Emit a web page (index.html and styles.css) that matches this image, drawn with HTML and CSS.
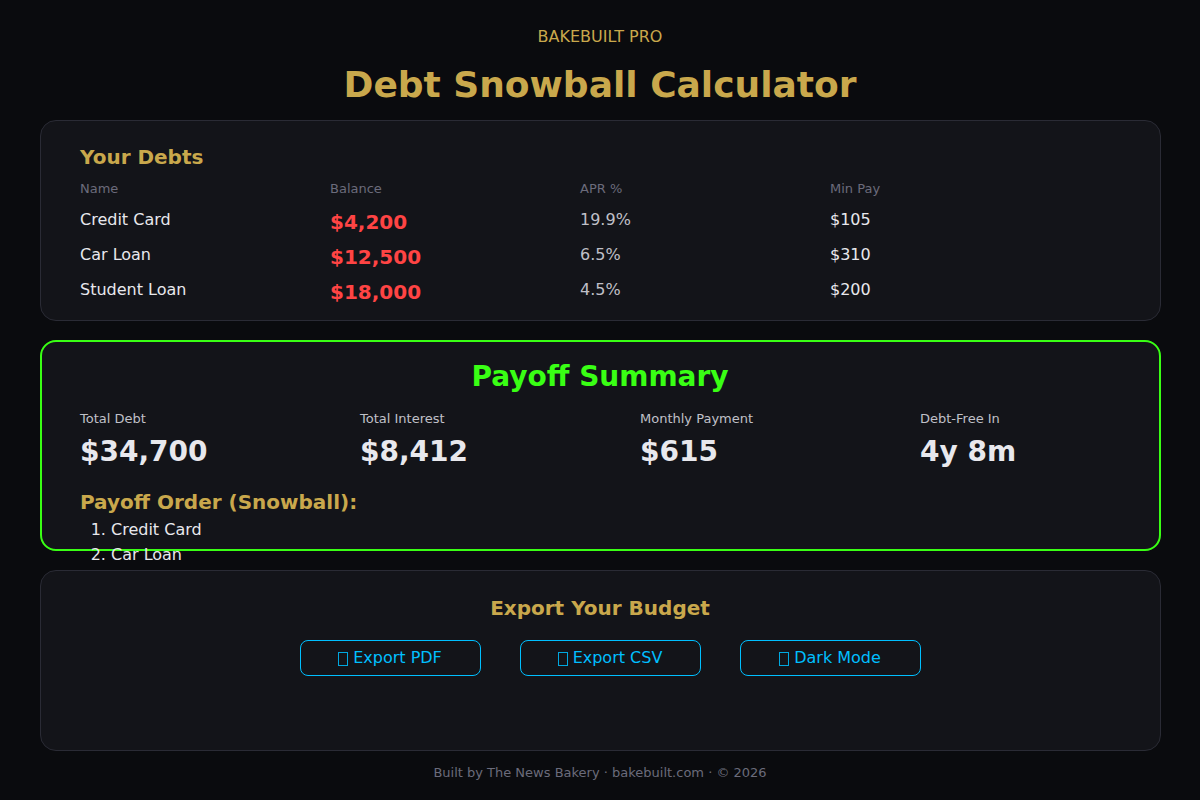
FILE: index.html
```
<!DOCTYPE html>
<html lang="en">
<head>
  <meta charset="UTF-8">
  <meta name="viewport" content="width=device-width, initial-scale=1.0">
  <title>Debt Snowball Calculator</title>
  <link rel="stylesheet" href="styles.css">
</head>
<body>

  <header>
    <div class="brand">BAKEBUILT PRO</div>
    <h1>Debt Snowball Calculator</h1>
  </header>

  <main>
    <section class="card debts">
      <h2>Your Debts</h2>
      <table>
        <thead>
          <tr>
            <th>Name</th>
            <th>Balance</th>
            <th>APR %</th>
            <th class="last">Min Pay</th>
          </tr>
        </thead>
        <tbody>
          <tr>
            <td>Credit Card</td>
            <td class="balance">$4,200</td>
            <td class="apr">19.9%</td>
            <td>$105</td>
          </tr>
          <tr>
            <td>Car Loan</td>
            <td class="balance">$12,500</td>
            <td class="apr">6.5%</td>
            <td>$310</td>
          </tr>
          <tr>
            <td>Student Loan</td>
            <td class="balance">$18,000</td>
            <td class="apr">4.5%</td>
            <td>$200</td>
          </tr>
        </tbody>
      </table>
    </section>

    <section class="card summary">
      <h2 class="summary-title">Payoff Summary</h2>
      <div class="stats">
        <div>
          <div class="label">Total Debt</div>
          <div class="value">$34,700</div>
        </div>
        <div>
          <div class="label">Total Interest</div>
          <div class="value">$8,412</div>
        </div>
        <div>
          <div class="label">Monthly Payment</div>
          <div class="value">$615</div>
        </div>
        <div>
          <div class="label">Debt-Free In</div>
          <div class="value">4y 8m</div>
        </div>
      </div>
      <h3>Payoff Order (Snowball):</h3>
      <ol>
        <li>Credit Card</li>
        <li>Car Loan</li>
      </ol>
    </section>

    <section class="card export">
      <h2>Export Your Budget</h2>
      <div class="buttons">
        <button type="button"><span class="icon"></span>Export PDF</button>
        <button type="button"><span class="icon"></span>Export CSV</button>
        <button type="button"><span class="icon"></span>Dark Mode</button>
      </div>
    </section>
  </main>

  <footer>Built by The News Bakery · bakebuilt.com · © 2026</footer>

</body>
</html>
```
FILE: styles.css
```
* {
  box-sizing: border-box;
}
body {
  margin: 0;
  background: #0a0b0e;
  color: #e8e8ed;
  font-family: "DejaVu Sans", sans-serif;
  font-size: 16px;
}
h1, h2, h3 {
  margin: 0;
  color: #c9a84c;
}
h2, h3 {
  font-size: 20px;
  line-height: 24px;
}
header {
  padding: 25px 0 11px;
  text-align: center;
}
.brand {
  color: #c9a84c;
  line-height: 24px;
  margin-bottom: 12px;
}
h1 {
  font-size: 36px;
  line-height: 48px;
}
main {
  display: flex;
  flex-direction: column;
  gap: 19px;
  padding: 0 39px 0 40px;
}
.card {
  background: #131419;
  border: 1px solid #2a2b35;
  border-radius: 16px;
  padding: 24px 39px 13px;
}

/* debts table */
table {
  width: 100%;
  table-layout: fixed;
  border-collapse: collapse;
}
th, td {
  padding: 0;
  text-align: left;
}
th {
  width: 250px;
  padding: 10px 0 3px;
  font-size: 13px;
  font-weight: normal;
  line-height: 20px;
  color: #6b6b7b;
}
th.last {
  width: auto;
}
td {
  height: 35px;
  line-height: 24px;
}
.balance {
  padding-top: 5px;
  font-size: 20px;
  font-weight: bold;
  color: #ff4444;
}
.apr {
  color: #c0c0c8;
}

/* payoff summary */
.summary {
  border: 2px solid #39ff14;
  padding: 19px 39px 0 38px;
}
.summary-title {
  text-align: center;
  font-size: 28px;
  line-height: 32px;
  color: #39ff14;
}
.stats {
  display: grid;
  grid-template-columns: 7fr 7fr 7fr 5fr;
  margin: 16px 0 18px;
}
.label {
  font-size: 13px;
  line-height: 20px;
  color: #c0c0c8;
}
.value {
  margin-top: 3px;
  font-size: 28px;
  font-weight: bold;
  line-height: 40px;
}
ol {
  /* the list runs past the bottom of the card */
  height: 32px;
  margin: 3px 0 0;
  padding-left: 31px;
  line-height: 25px;
}

/* export */
.export {
  padding: 25px 40px 74px 39px;
  text-align: center;
}
.buttons {
  display: flex;
  justify-content: center;
  gap: 39px;
  margin: 20px 0 0 21px;
}
button {
  display: flex;
  align-items: center;
  justify-content: center;
  gap: 5px;
  width: 181px;
  height: 36px;
  padding: 0 1px 2px 0;
  background: transparent;
  border: 1px solid #00bfff;
  border-radius: 8px;
  color: #00bfff;
  font-family: inherit;
  font-size: 16px;
  cursor: pointer;
}
.icon {
  width: 10px;
  height: 14px;
  margin-top: 4px;
  border: 1px solid #00a8e0;
}

footer {
  padding-top: 12px;
  text-align: center;
  font-size: 13px;
  line-height: 20px;
  color: #6b6b7b;
}
```
